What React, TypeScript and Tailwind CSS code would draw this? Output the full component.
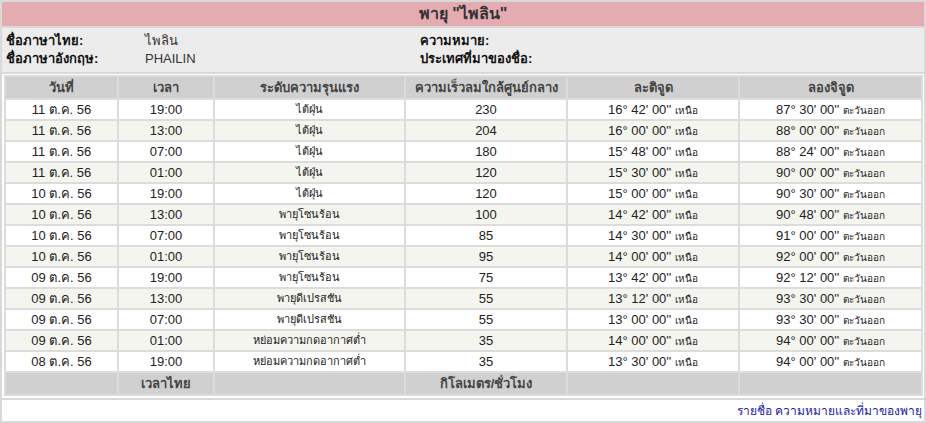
import React from "react";

const rows: [string, string, string, string, string, string][] = [
  ["11 ต.ค. 56", "19:00", "ไต้ฝุ่น", "230", "16° 42' 00''", "87° 30' 00''"],
  ["11 ต.ค. 56", "13:00", "ไต้ฝุ่น", "204", "16° 00' 00''", "88° 00' 00''"],
  ["11 ต.ค. 56", "07:00", "ไต้ฝุ่น", "180", "15° 48' 00''", "88° 24' 00''"],
  ["11 ต.ค. 56", "01:00", "ไต้ฝุ่น", "120", "15° 30' 00''", "90° 00' 00''"],
  ["10 ต.ค. 56", "19:00", "ไต้ฝุ่น", "120", "15° 00' 00''", "90° 30' 00''"],
  ["10 ต.ค. 56", "13:00", "พายุโซนร้อน", "100", "14° 42' 00''", "90° 48' 00''"],
  ["10 ต.ค. 56", "07:00", "พายุโซนร้อน", "85", "14° 30' 00''", "91° 00' 00''"],
  ["10 ต.ค. 56", "01:00", "พายุโซนร้อน", "95", "14° 00' 00''", "92° 00' 00''"],
  ["09 ต.ค. 56", "19:00", "พายุโซนร้อน", "75", "13° 42' 00''", "92° 12' 00''"],
  ["09 ต.ค. 56", "13:00", "พายุดีเปรสชัน", "55", "13° 12' 00''", "93° 30' 00''"],
  ["09 ต.ค. 56", "07:00", "พายุดีเปรสชัน", "55", "13° 00' 00''", "93° 30' 00''"],
  ["09 ต.ค. 56", "01:00", "หย่อมความกดอากาศต่ำ", "35", "14° 00' 00''", "94° 00' 00''"],
  ["08 ต.ค. 56", "19:00", "หย่อมความกดอากาศต่ำ", "35", "13° 30' 00''", "94° 00' 00''"],
];

const font = { fontFamily: '"Liberation Sans", Tahoma, "Noto Sans", sans-serif' };

export default function App() {
  return (
    <div
      className="w-[926px] h-[423px] bg-[#d9d9d9] p-[2px] flex flex-col gap-[2px] text-[#222]"
      style={font}
    >
      <div className="h-[24px] bg-[#e4acb0] flex items-center justify-center text-[16px] font-bold text-[#333] leading-none">
        พายุ "ไพลิน"
      </div>
      <div className="h-[44px] bg-[#ececec] pl-[4px] grid grid-cols-[139px_275px_1fr] content-center text-[13px] leading-[18px]">
        <div className="font-bold text-[#111]">ชื่อภาษาไทย:</div>
        <div className="text-[#333]">ไพลิน</div>
        <div className="font-bold text-[#111]">ความหมาย:</div>
        <div className="font-bold text-[#111]">ชื่อภาษาอังกฤษ:</div>
        <div className="text-[#333]">PHAILIN</div>
        <div className="font-bold text-[#111]">ประเทศที่มาของชื่อ:</div>
      </div>
      <div className="h-[324px] bg-white pt-[1px] pl-[2px]">
        <table className="table-fixed w-[919px] border-separate border-spacing-[2px] bg-[#dcdcdc]">
          <thead>
            <tr className="h-[21px] bg-[#d0d0d0] text-[13px] font-bold text-[#444]">
              <th className="w-[111px] p-0 font-bold">วันที่</th>
              <th className="w-[94px] p-0 font-bold">เวลา</th>
              <th className="w-[189px] p-0 font-bold">ระดับความรุนแรง</th>
              <th className="w-[160px] p-0 font-bold">ความเร็วลมใกล้ศูนย์กลาง</th>
              <th className="w-[170px] p-0 font-bold">ละติจูด</th>
              <th className="w-[181px] p-0 font-bold">ลองจิจูด</th>
            </tr>
          </thead>
          <tbody>
            {rows.map((r, i) => (
              <tr
                key={i}
                className={`h-[19px] text-center text-[13px] leading-none ${
                  i % 2 === 0 ? "bg-white" : "bg-[#f5f5f0]"
                }`}
              >
                <td className="p-0">{r[0]}</td>
                <td className="p-0">{r[1]}</td>
                <td className="p-0 text-[11px]">{r[2]}</td>
                <td className="p-0">{r[3]}</td>
                <td className="p-0">
                  {r[4]} <span className="text-[10px]">เหนือ</span>
                </td>
                <td className="p-0">
                  {r[5]} <span className="text-[10px]">ตะวันออก</span>
                </td>
              </tr>
            ))}
            <tr className="h-[21px] bg-[#d0d0d0] text-[13px] font-bold text-[#444] text-center">
              <td className="p-0"></td>
              <td className="p-0">เวลาไทย</td>
              <td className="p-0"></td>
              <td className="p-0">กิโลเมตร/ชั่วโมง</td>
              <td className="p-0"></td>
              <td className="p-0"></td>
            </tr>
          </tbody>
        </table>
      </div>
      <div className="h-[21px] bg-white flex items-center justify-end pr-[2px] text-[12px] text-[#1a1aa8]">
        รายชื่อ ความหมายและที่มาของพายุ
      </div>
    </div>
  );
}
